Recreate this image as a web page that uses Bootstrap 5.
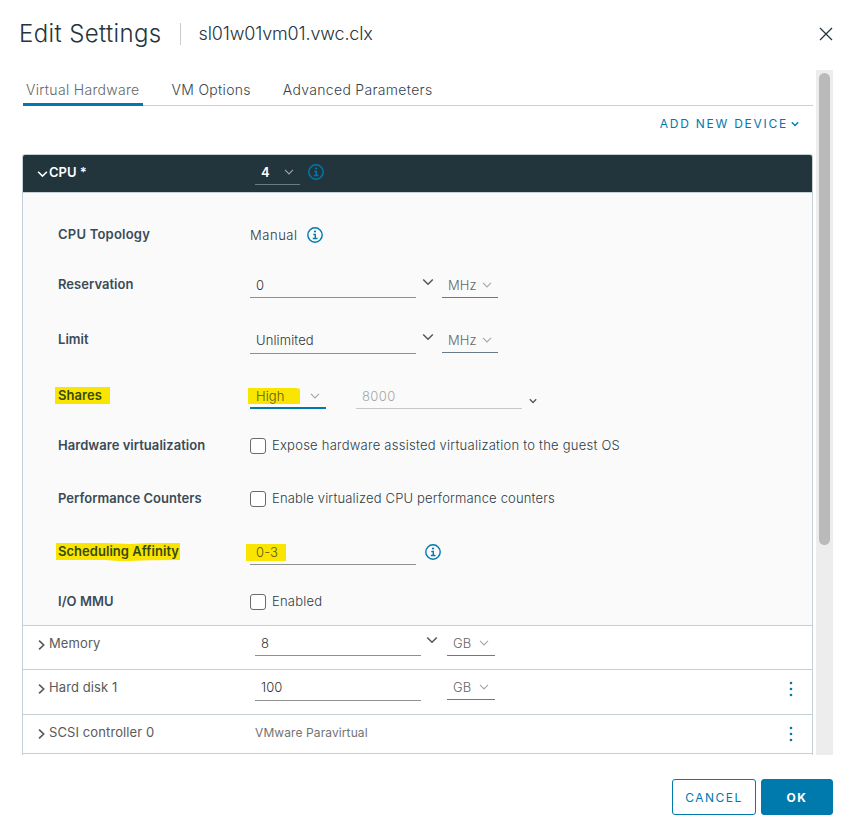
<!DOCTYPE html>
<html lang="en">

<head>
    <meta charset="UTF-8">
    <meta name="viewport" content="width=device-width, initial-scale=1.0">
    <title>Edit Settings</title>
    <!-- Bootstrap CSS -->
    <link href="https://cdn.jsdelivr.net/npm/bootstrap@5.3.2/dist/css/bootstrap.min.css" rel="stylesheet">
    <script src="https://cdn.jsdelivr.net/npm/bootstrap@5.3.2/dist/js/bootstrap.bundle.min.js"></script>
    <style>
        body {
            font-family: Inter, Lato, "Liberation Sans", sans-serif;
            font-size: 13px;
            line-height: 24px;
            letter-spacing: .1px;
            color: #565656;
            background: #fff;
            height: 836px;
            overflow: hidden;
            white-space: nowrap;
        }

        svg { display: block; flex: none; fill: none; stroke: currentColor; }

        /* Header */
        .dialog-head { height: 70px; padding: 0 21px 2px 19px; color: #25343d; }
        .dialog-head h1 { font-size: 24px; font-weight: 300; line-height: 30px; letter-spacing: .38px; }
        .vm-name { border-left: 1px solid #ccc; margin-left: 18px; padding-left: 18px; height: 22px; line-height: 22px; font-size: 18px; font-weight: 300; letter-spacing: -.15px; }

        /* Scroll area */
        .dialog-main { height: 685px; padding-left: 22px; overflow: hidden; }
        .pane { width: 791px; height: 685px; overflow: hidden; }
        .scroll-track { width: 17px; margin-left: 3px; margin-right: 21px; padding: 3px; background: #ededed; }
        .scroll-thumb { width: 11px; height: 472px; border-radius: 6px; background: #bababa; }

        .hw-tabs { height: 36px; margin-left: 1px; border-bottom: 1px solid #c8d1d5; }
        .hw-tabs .nav-link { height: 36px; padding: 8px 3px 0; margin-right: 26px; font-size: 14px; font-weight: 300; letter-spacing: .31px; color: #36434e; border-bottom: 0 solid #0079ad; }
        .hw-tabs .nav-link.active { color: #666; border-bottom-width: 3px; }
        .add-device { height: 48px; padding: 6px 14px 0 0; color: #0079ad; font-size: 12px; letter-spacing: 1.75px; }

        /* Hardware rows */
        .hw-list { border: 1px solid #c5d0d5; border-bottom: 0; border-radius: 3px 3px 0 0; }
        .hw-row { padding-left: 14px; border-bottom: 1px solid #c5d0d5; }
        .hw-row .hw-name { width: 218px; padding-top: 5px; letter-spacing: .1px; color: #5a5a5a; }
        .hw-cpu { height: 38px; background: #22343c; border-radius: 2px 2px 0 0; }
        .hw-cpu .hw-name { font-weight: 600; letter-spacing: 0; color: #fff; }
        .hw-arrow { margin: 8px 4px 0 1px; }

        .detail { height: 433px; padding: 25px 0 0 35px; background: #fafafa; border-bottom: 1px solid #c5d0d5; }
        .detail-row { height: 34px; }
        .detail-label { width: 192px; padding-top: 4px; font-weight: 600; letter-spacing: .04px; color: #3a4b58; }
        .manual { width: 57px; padding-top: 5px; letter-spacing: .55px; color: #333; }

        .field { width: 166px; height: 30px; padding: 5px 6px 0; border-bottom: 1px solid #8f8f8f; color: #333; }
        .field-tall { height: 31px; }
        .field-off { color: #a6a6a6; border-color: #c8c8c8; letter-spacing: .4px; }
        .unit { height: 30px; padding: 5px 6px 0; border-bottom: 1px solid #6a7a87; color: #666; }
        .unit svg { color: #a6a6a6; margin-top: 8px; }
        .unit-mhz { width: 56px; margin-left: 8px; }
        .unit-gb { width: 48px; margin-left: 9px; }
        .drop { width: 12px; margin: 10px 0 0 6px; color: #565656; }
        .info { color: #0079ad; }
        .kebab { color: #0079ad; fill: currentColor; stroke: none; margin: 11px 19px 0 auto; }
        .check-box { width: 16px; height: 16px; margin-top: 9px; margin-right: 6px; border: 1px solid #6a6a6a; border-radius: 3px; background: #fff; }
        .check-text { padding-top: 4px; font-weight: 300; letter-spacing: .24px; color: #2d3c47; }
        .manual, .field, .unit { font-weight: 300; }

        /* Marker strokes */
        .marker { position: relative; isolation: isolate; }
        .marker::before { content: ""; position: absolute; z-index: -1; background: #fae500; left: -3px; right: -3px; top: 4px; bottom: 3px; }
        .marker-shares { color: #364a10; }
        .marker-shares::before { right: -8px; }
        .marker-high::before { left: -8px; right: -15px; border-radius: 0 5px 0 0 / 0 2px 0 0; }
        .marker-aff { color: #364a10; }
        .marker-aff::before { left: -2px; right: -1px; clip-path: polygon(0 0, 40% 0, 60% 5%, 75% 0, 100% 0, 100% 94%, 75% 96%, 60% 100%, 50% 100%, 40% 94%, 0 94%); bottom: 2px; }
        .marker-cpus::before { left: -10px; right: -8px; }
        .marker-high, .marker-cpus { color: #5a5a10; }

        /* Footer */
        .dialog-foot { padding: 24px 21px 0 0; gap: 5px; }
        .dialog-foot .btn { height: 36px; padding: 0; border-radius: 3px; font-size: 12px; line-height: 36px; letter-spacing: 1.45px; border-color: #0079ad; }
        .btn-cancel { width: 84px; color: #0079ad; }
        .btn-ok, .btn-ok:hover { width: 72px; color: #fff; background: #0079ad; font-weight: 700; }
    </style>
</head>

<body>
    <!-- Shared icons -->
    <svg width="0" height="0" class="position-absolute">
        <symbol id="down" viewBox="0 0 12 8"><path d="M1.2 1.5 6 6.3l4.8-4.8" /></symbol>
        <symbol id="right" viewBox="0 0 8 12"><path d="M1.2 1 6.5 6l-5.3 5" /></symbol>
        <symbol id="info" viewBox="0 0 16 16">
            <circle cx="8" cy="8" r="7.2" stroke-width="1.4" />
            <circle cx="8" cy="4.5" r="1.1" fill="currentColor" stroke="none" />
            <path d="M6.300 7.500h2v4M5.800 11.500h4.700" stroke-width="1.4" />
        </symbol>
        <symbol id="dots" viewBox="0 0 4 16"><circle cx="2" cy="2" r="1.3" /><circle cx="2" cy="8" r="1.3" /><circle cx="2" cy="14" r="1.3" /></symbol>
    </svg>

    <header class="dialog-head d-flex align-items-center">
        <h1 class="mb-0">Edit Settings</h1>
        <div class="vm-name">sl01w01vm01.vwc.clx</div>
        <svg class="ms-auto" width="14" height="14" viewBox="0 0 14 14" stroke-width="1.3"><path d="M1 1l12 12M13 1L1 13" /></svg>
    </header>

    <main class="dialog-main d-flex">
        <div class="pane">
            <nav class="hw-tabs nav flex-nowrap">
                <a class="nav-link active" href="#">Virtual Hardware</a>
                <a class="nav-link" href="#">VM Options</a>
                <a class="nav-link" href="#">Advanced Parameters</a>
            </nav>

            <div class="add-device d-flex justify-content-end">
                <span>ADD NEW DEVICE</span>
                <svg class="mt-2" style="margin-left:3px" width="8" height="8" stroke-width="2"><use href="#down" width="8" height="8" /></svg>
            </div>

            <div class="hw-list">
                <div class="hw-row hw-cpu d-flex">
                    <div class="hw-name d-flex"><svg style="margin:9px 1px 0 0" width="11" height="10" stroke-width="1.7"><use href="#down" width="11" height="10" /></svg><span>CPU *</span></div>
                    <div class="unit d-flex text-white" style="width:45px"><span class="fw-semibold">4</span><svg class="ms-auto" width="10" height="8" stroke-width="1.3"><use href="#down" width="10" height="8" /></svg></div>
                    <svg class="info" style="margin:9px 0 0 8px" width="16" height="16"><use href="#info" width="16" height="16" /></svg>
                </div>

                <!-- CPU details -->
                <div class="detail">
                    <div class="detail-row d-flex">
                        <div class="detail-label" style="letter-spacing:.22px">CPU Topology</div>
                        <div class="manual">Manual</div>
                        <svg class="info mt-2" width="16" height="17"><use href="#info" y="1" width="16" height="16" /></svg>
                    </div>
                    <div class="detail-row d-flex" style="margin-top:16px">
                        <div class="detail-label">Reservation</div>
                        <div class="field">0</div>
                        <svg class="drop" width="12" height="8" stroke-width="1.5"><use href="#down" width="12" height="8" /></svg>
                        <div class="unit unit-mhz d-flex justify-content-between"><span>MHz</span><svg width="10" height="8" stroke-width="1.3"><use href="#down" width="10" height="8" /></svg></div>
                    </div>
                    <div class="detail-row d-flex" style="margin-top:21px">
                        <div class="detail-label">Limit</div>
                        <div class="field field-tall">Unlimited</div>
                        <svg class="drop" width="12" height="8" stroke-width="1.5"><use href="#down" width="12" height="8" /></svg>
                        <div class="unit unit-mhz d-flex justify-content-between"><span>MHz</span><svg width="10" height="8" stroke-width="1.3"><use href="#down" width="10" height="8" /></svg></div>
                    </div>
                    <div class="detail-row d-flex" style="margin-top:22px">
                        <div class="detail-label"><span class="marker marker-shares d-inline-block">Shares</span></div>
                        <div class="unit d-flex justify-content-between" style="width:76px;border-bottom:2px solid #0079ad"><span class="marker marker-high">High</span><svg width="10" height="8" stroke-width="1.3"><use href="#down" width="10" height="8" /></svg></div>
                        <div class="field field-off" style="margin-left:30px">8000</div>
                        <svg style="margin:19px 0 0 7px" width="8" height="6" stroke-width="2"><use href="#down" width="8" height="6" /></svg>
                    </div>
                    <div class="detail-row d-flex" style="margin-top:16px">
                        <div class="detail-label">Hardware virtualization</div>
                        <div class="check-box"></div>
                        <div class="check-text">Expose hardware assisted virtualization to the guest OS</div>
                    </div>
                    <div class="detail-row d-flex" style="margin-top:19px">
                        <div class="detail-label">Performance Counters</div>
                        <div class="check-box"></div>
                        <div class="check-text" style="letter-spacing:.17px">Enable virtualized CPU performance counters</div>
                    </div>
                    <div class="detail-row d-flex" style="margin-top:19px">
                        <div class="detail-label"><span class="marker marker-aff d-inline-block">Scheduling Affinity</span></div>
                        <div class="field"><span class="marker marker-cpus d-inline-block">0-3</span></div>
                        <svg class="info" style="margin:9px 0 0 9px" width="16" height="16"><use href="#info" width="16" height="16" /></svg>
                    </div>
                    <div class="detail-row d-flex" style="margin-top:16px">
                        <div class="detail-label">I/O MMU</div>
                        <div class="check-box"></div>
                        <div class="check-text">Enabled</div>
                    </div>
                </div>

                <!-- Other devices -->
                <div class="hw-row d-flex" style="height:44px">
                    <div class="hw-name d-flex"><svg class="hw-arrow" width="7" height="12" stroke-width="1.9"><use href="#right" width="7" height="12" /></svg><span>Memory</span></div>
                    <div class="field">8</div>
                    <svg class="drop" style="margin-left:5px" width="12" height="8" stroke-width="1.5"><use href="#down" width="12" height="8" /></svg>
                    <div class="unit unit-gb d-flex justify-content-between"><span>GB</span><svg width="10" height="8" stroke-width="1.3"><use href="#down" width="10" height="8" /></svg></div>
                </div>
                <div class="hw-row d-flex" style="height:45px">
                    <div class="hw-name d-flex"><svg class="hw-arrow" width="7" height="12" stroke-width="1.9"><use href="#right" width="7" height="12" /></svg><span>Hard disk 1</span></div>
                    <div class="field field-tall">100</div>
                    <div class="unit unit-gb d-flex justify-content-between" style="margin-left:26px"><span>GB</span><svg width="10" height="8" stroke-width="1.3"><use href="#down" width="10" height="8" /></svg></div>
                    <svg class="kebab" width="4" height="16"><use href="#dots" width="4" height="16" /></svg>
                </div>
                <div class="hw-row d-flex" style="height:39px">
                    <div class="hw-name d-flex"><svg class="hw-arrow" width="7" height="12" stroke-width="1.9"><use href="#right" width="7" height="12" /></svg><span>SCSI controller 0</span></div>
                    <div style="padding-top:6px;font-size:12px;color:#737373">VMware Paravirtual</div>
                    <svg class="kebab" width="4" height="16"><use href="#dots" width="4" height="16" /></svg>
                </div>
                <div class="hw-row" style="height:20px"></div>
            </div>
        </div>
        <div class="scroll-track"><div class="scroll-thumb"></div></div>
    </main>

    <footer class="dialog-foot d-flex justify-content-end">
        <button type="button" class="btn btn-cancel">CANCEL</button>
        <button type="button" class="btn btn-ok">OK</button>
    </footer>
</body>

</html>
